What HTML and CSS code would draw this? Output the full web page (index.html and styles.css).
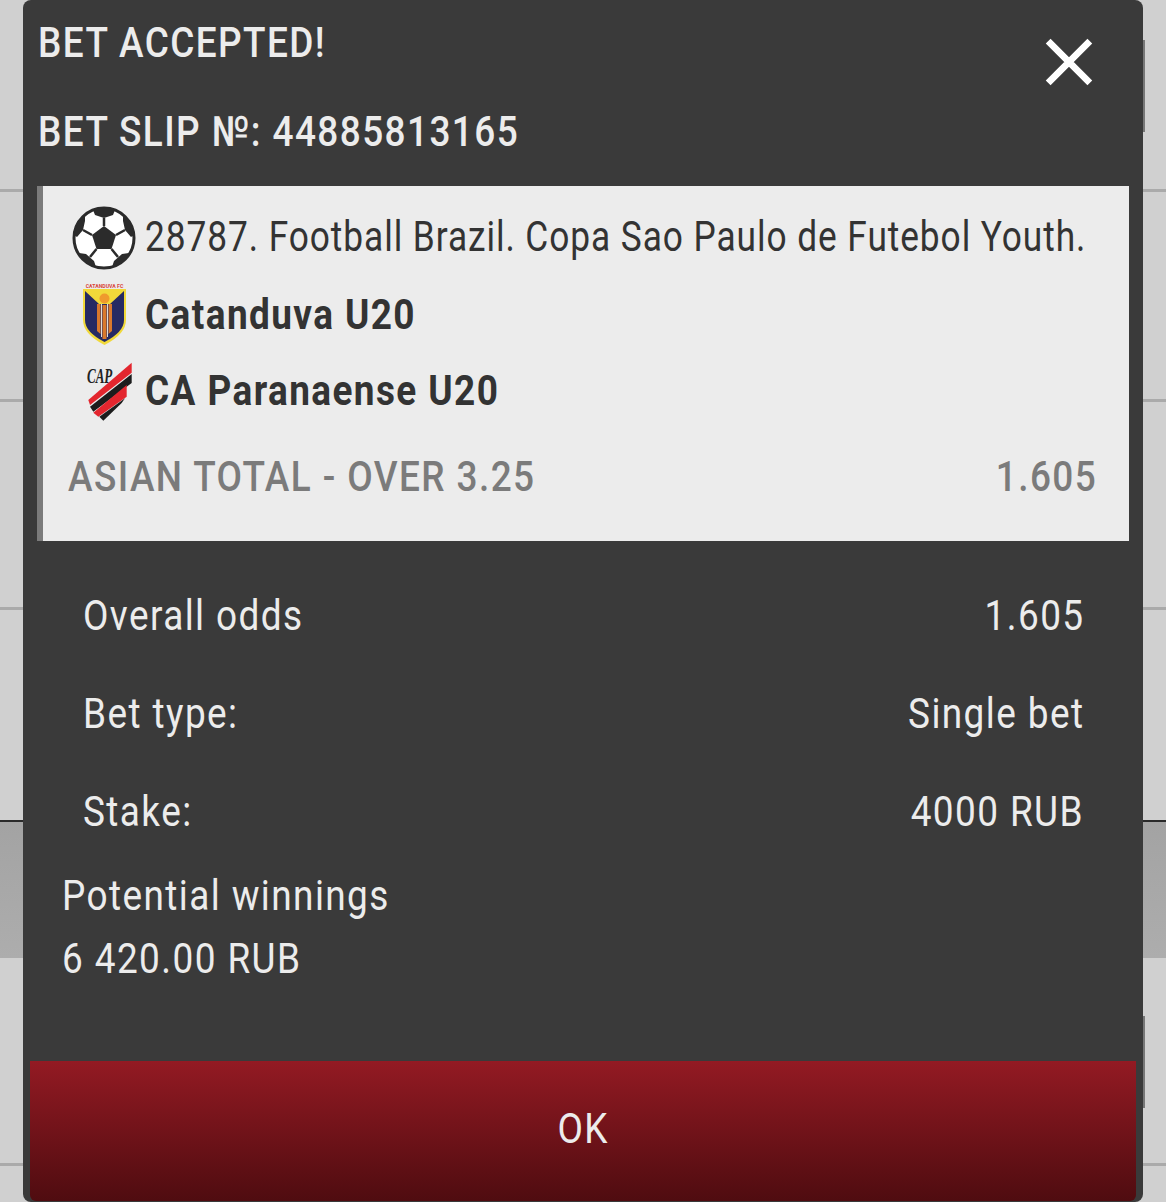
FILE: index.html
```html
<!DOCTYPE html>
<html lang="en">
<head>
<meta charset="utf-8">
<title>Bet accepted</title>
<link rel="stylesheet" href="styles.css">
</head>
<body>
<div class="backdrop" aria-hidden="true">
  <div class="bg-row bg-row-a"></div>
  <div class="bg-row bg-row-b"></div>
  <div class="bg-row bg-row-c"></div>
  <div class="bg-row bg-row-d"></div>
  <div class="bg-panel"></div>
  <div class="bg-row bg-row-e"></div>
  <div class="bg-row bg-row-f"></div>
</div>
<span class="edge edge-top"></span>
<span class="edge edge-bottom"></span>
<section class="modal">
  <header class="head">
    <div class="head-row"><span class="tx l">BET ACCEPTED!</span></div>
    <div class="head-row"><span class="tx l">BET SLIP №: 44885813165</span></div>
    <svg class="close" viewBox="0 0 48 48"><path d="M4 4 44 44M44 4 4 44" stroke="#fff" stroke-width="6.5" fill="none"/></svg>
  </header>
  <div class="card">
    <div class="line line-league">
      <svg class="ico ball" viewBox="0 0 64 64">
        <circle cx="32" cy="32" r="30" fill="#fff" stroke="#2b2b2b" stroke-width="3"/>
        <path d="M32 20 44 29 39.500 43H24.500L20 29Z" fill="#2b2b2b"/>
        <path d="M21 4Q32 0 43 4L41 9 32 12 23 9Z M51 9Q60 17 62 29L59 31 53 24 51 15Z M13 9 13 15 11 24 5 31 2 29Q4 17 13 9Z M7 47 14 48 22 55 24 61Q12 59 7 47Z M57 47 50 48 42 55 40 61Q52 59 57 47Z" fill="#2b2b2b"/>
        <path d="M32 12V20M44 29 53 24M20 29 11 24M24.500 43 18 51M39.500 43 46 51" stroke="#2b2b2b" stroke-width="2.500" fill="none"/>
      </svg>
      <span class="tx l tight">28787. Football Brazil. Copa Sao Paulo de Futebol Youth.</span>
    </div>
    <div class="line line-team1">
      <svg class="ico crest1" viewBox="0 0 45 62">
        <text class="crest-name" x="22.500" y="4.500" text-anchor="middle">CATANDUVA FC</text>
        <path d="M1 6H44V37Q44 51 22.500 62 1 51 1 37Z" fill="#f1d93a"/>
        <path d="M3 8H42V37Q42 49 22.500 59 3 49 3 37Z" fill="#262a63"/>
        <path d="M3 8H42L28 21H17Z" fill="#f1d93a"/>
        <circle cx="22.500" cy="15.500" r="5" fill="#ef9a2d"/>
        <path d="M15 21H18.500V51L15 48ZM26.500 21H30V48L26.500 51Z" fill="#d9782c"/>
        <path d="M20.500 22H24.500V56H20.500Z" fill="#d9782c"/>
        <path d="M19.500 21V54M25.500 21V54" stroke="#f4f1e6" stroke-width=".9"/>
      </svg>
      <span class="tx l strong">Catanduva U20</span>
    </div>
    <div class="line line-team2">
      <svg class="ico crest2" viewBox="84 360 50 62">
        <text class="crest-cap" x="0" y="0" transform="translate(87 383) scale(.62 1)">CAP</text>
        <path d="M131.700 362.700V372.700L90 405 88.300 400Z" fill="#e3262e"/>
        <path d="M131.700 374V383L93.300 411.700 90 406.700Z" fill="#1c1c1c"/>
        <path d="M126.700 385V396.700L98.300 416.700 93.300 412.700Z" fill="#e3262e"/>
        <path d="M125 398.300 121.700 403 103.300 420.700 99.300 416.700Z" fill="#1c1c1c"/>
      </svg>
      <span class="tx l strong">CA Paranaense U20</span>
    </div>
    <div class="line market">
      <span class="tx l">ASIAN TOTAL - OVER 3.25</span>
      <span class="tx r">1.605</span>
    </div>
  </div>
  <div class="summary">
    <div class="sum-row"><span class="tx l">Overall odds</span><span class="tx r">1.605</span></div>
    <div class="sum-row"><span class="tx l">Bet type:</span><span class="tx r">Single bet</span></div>
    <div class="sum-row"><span class="tx l">Stake:</span><span class="tx r">4000 RUB</span></div>
  </div>
  <div class="winnings">
    <div class="win-line"><span class="tx l">Potential winnings</span></div>
    <div class="win-line"><span class="tx l">6 420.00 RUB</span></div>
  </div>
  <div class="actions">
    <div class="ok"><span class="tx c">OK</span></div>
  </div>
</section>
</body>
</html>
```
FILE: styles.css
```css
* { box-sizing: border-box; }
html, body { margin: 0; padding: 0; }
body {
  width: 1166px;
  height: 1202px;
  overflow: hidden;
  position: relative;
  background: #cfcfcf;
  font-family: Roboto, "Liberation Sans", sans-serif;
}
.backdrop { display: flex; flex-direction: column; height: 1202px; }
.bg-row { border-bottom: 3px solid #aaaaaa; background: #d0d0d0; }
.bg-row-a { height: 192px; }
.bg-row-b { height: 210px; }
.bg-row-c { height: 208px; }
.bg-row-d { height: 212px; border-bottom: 2px solid #2a2a2a; }
.bg-panel { height: 136px; background: linear-gradient(#a3a3a3, #adadad); }
.bg-row-e { height: 208px; }
.bg-row-f { flex: 1; border: 0; }
.edge { position: absolute; width: 2px; background: #777; left: 1143px; }
.edge-top { top: 40px; height: 92px; }
.edge-bottom { top: 1016px; height: 92px; }
.modal {
  position: absolute;
  left: 23px;
  top: 0;
  width: 1120px;
  height: 1202px;
  background: #3a3a3a;
  border-radius: 8px;
  color: #ececec;
  display: flex;
  flex-direction: column;
  overflow: hidden;
}
.tx {
  display: inline-block;
  white-space: nowrap;
  font-size: 42px;
  line-height: 50px;
  letter-spacing: 1.6px;
  transform: scaleX(.88);
}
.tx.l { transform-origin: left center; }
.tx.r { transform-origin: right center; margin-right: -1px; }
.tx.c { transform-origin: center; }
.tx.tight { letter-spacing: 1.1px; transform: scaleX(.84); }
.head { position: relative; height: 186px; padding: 0 15px; font-weight: 500; }
.head-row { height: 93px; display: flex; align-items: center; font-weight: 500; }
.head-row:first-child { height: 85px; }
.close { position: absolute; left: 1021px; top: 37px; width: 50px; height: 50px; }
.card {
  margin-left: 14px;
  width: 1092px;
  height: 355px;
  background: #ececec;
  border-left: 6px solid #7b7b7b;
  color: #333;
  display: flex;
  flex-direction: column;
}
.line { display: flex; align-items: center; position: relative; }
.line-league { height: 102px; padding-left: 102px; }
.line-team1 { height: 66px; padding-left: 102px; margin-top: -6px; }
.line-team2 { height: 86px; padding-left: 102px; }
.ico { position: absolute; }
.ball { left: 29px; top: 20px; width: 64px; height: 64px; }
.crest1 { left: 39px; top: 1px; width: 45px; height: 62px; }
.crest2 { left: 41px; top: 12px; width: 50px; height: 62px; }
.crest-name { font-size: 5.200px; font-weight: 700; fill: #d8453a; font-family: Roboto, sans-serif; }
.crest-cap { font-size: 21px; font-weight: 700; font-style: italic; fill: #222; font-family: "Liberation Serif", serif; }
.strong { font-weight: 700; }
.market {
  height: 86px;
  padding: 0 33px 0 25px;
  justify-content: space-between;
  color: #7b7b7b;
  font-weight: 500;
}
.summary { padding: 26px 60px 0; display: flex; flex-direction: column; height: 304px; }
.sum-row { flex: none; height: 98px; display: flex; justify-content: space-between; align-items: center; }
.winnings { padding-left: 39px; margin-top: 19px; }
.win-line { height: 63px; display: flex; align-items: center; }
.actions { margin-top: auto; padding: 0 7px 1px; }
.ok {
  height: 140px;
  padding-bottom: 4px;
  background: linear-gradient(#931a23, #4f0c10);
  display: flex;
  align-items: center;
  justify-content: center;
  border-radius: 0 0 6px 6px;
}
```
